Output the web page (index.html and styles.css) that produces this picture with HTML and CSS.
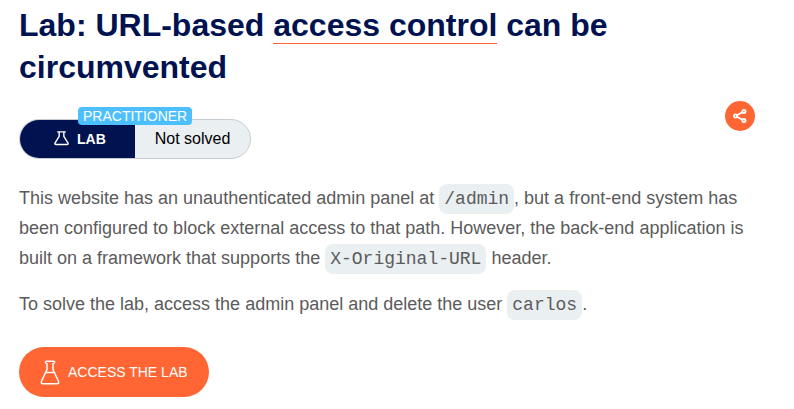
FILE: index.html
```
<!DOCTYPE html>
<html lang="en">
<head>
<meta charset="utf-8">
<title>Lab</title>
<link rel="stylesheet" href="styles.css">
</head>
<body>
<main class="lab">
  <h1>Lab: URL-based <span class="term">access control</span> can be circumvented</h1>
  <div class="bar">
    <div class="status">
      <span class="level">PRACTITIONER</span>
      <span class="kind"><svg class="flask-small" viewBox="0 0 16 16"><path d="M4 1.500h8M5.500 2v4.200L1.200 13.200q-.8 1.800 1 1.800h11.600q1.800 0 1-1.800L10.500 6.200V2"/></svg>LAB</span>
      <span class="state">Not solved</span>
    </div>
    <a class="share"><svg viewBox="0 0 16 16"><path d="M10.400 4.200 5 7.200M5 8.800l5.400 3"/><circle cx="11.900" cy="3.400" r="1.600"/><circle cx="3.500" cy="8" r="1.600"/><circle cx="11.900" cy="12.600" r="1.600"/></svg></a>
  </div>
  <p>This website has an unauthenticated admin panel at <code>/admin</code>, but a front-end system has been configured to block external access to that path. However, the back-end application is built on a framework that supports the <code>X-Original-URL</code> header.</p>
  <p>To solve the lab, access the admin panel and delete the user <code>carlos</code>.</p>
  <a class="launch"><svg class="flask" viewBox="0 0 20 25"><path d="M6.500 1.200h7q1.200 0 1.200 1t-1.700 1.600V9.500L18.600 21.500q.6 2.200-1.600 2.200H3Q.8 23.700 1.400 21.500L7 9.500V3.800Q5.300 3.200 5.300 2.200T6.500 1.200ZM5.500 12.500h9"/></svg>ACCESS THE LAB</a>
</main>
</body>
</html>
```
FILE: styles.css
```
* { box-sizing: border-box; }
body { margin: 0; background: #fff; font-family: "Liberation Sans", Arial, sans-serif; }
.lab { padding: 4px 39px 0 19px; }
h1 { margin: 0; color: #00124f; font-size: 32px; line-height: 42px; font-weight: 700; }
.term { border-bottom: 1px solid #ff6633; }
.bar { display: flex; justify-content: space-between; height: 71px; padding-top: 31px; margin-bottom: 24px; }
.status { position: relative; display: flex; width: 232px; height: 40px; border: 1px solid #c5cdd2; border-radius: 20px; background: #eaeff2; font-size: 16px; line-height: 38px; }
.kind { display: flex; align-items: center; gap: 8px; width: 115px; padding-left: 34px; background: #00124f; color: #fff; font-size: 14px; font-weight: 700; border-radius: 19px 0 0 19px; }
.state { flex: 1; text-align: center; color: #000; }
.level { position: absolute; left: 58px; top: -13px; height: 18px; padding: 0 5px; border-radius: 4px; background: #4dbfff; color: #fff; font-size: 14px; line-height: 18px; }
svg { fill: none; stroke: #fff; stroke-linecap: round; stroke-linejoin: round; }
.flask-small { width: 15px; height: 16px; margin-top: -2px; stroke-width: 1.5; }
.share { display: flex; align-items: center; justify-content: center; width: 30px; height: 30px; margin-top: -18px; border-radius: 50%; background: #ff6633; }
.share svg { width: 16px; height: 16px; stroke-width: 1.8; }
p { margin: 0 0 16px; color: #5b5b5b; font-size: 18px; line-height: 30px; }
code { padding: 5px; border-radius: 8px; background: #eaeff2; font-family: "Liberation Mono", monospace; font-size: 18px; line-height: 1; }
.launch { display: flex; align-items: center; gap: 7px; width: 190px; height: 50px; margin-top: 28px; padding-left: 22px; border-radius: 25px; background: #ff6633; color: #fff; font-size: 14px; }
.flask { width: 20px; height: 25px; margin-left: -1px; margin-right: 1px; stroke-width: 1.5; }
```
